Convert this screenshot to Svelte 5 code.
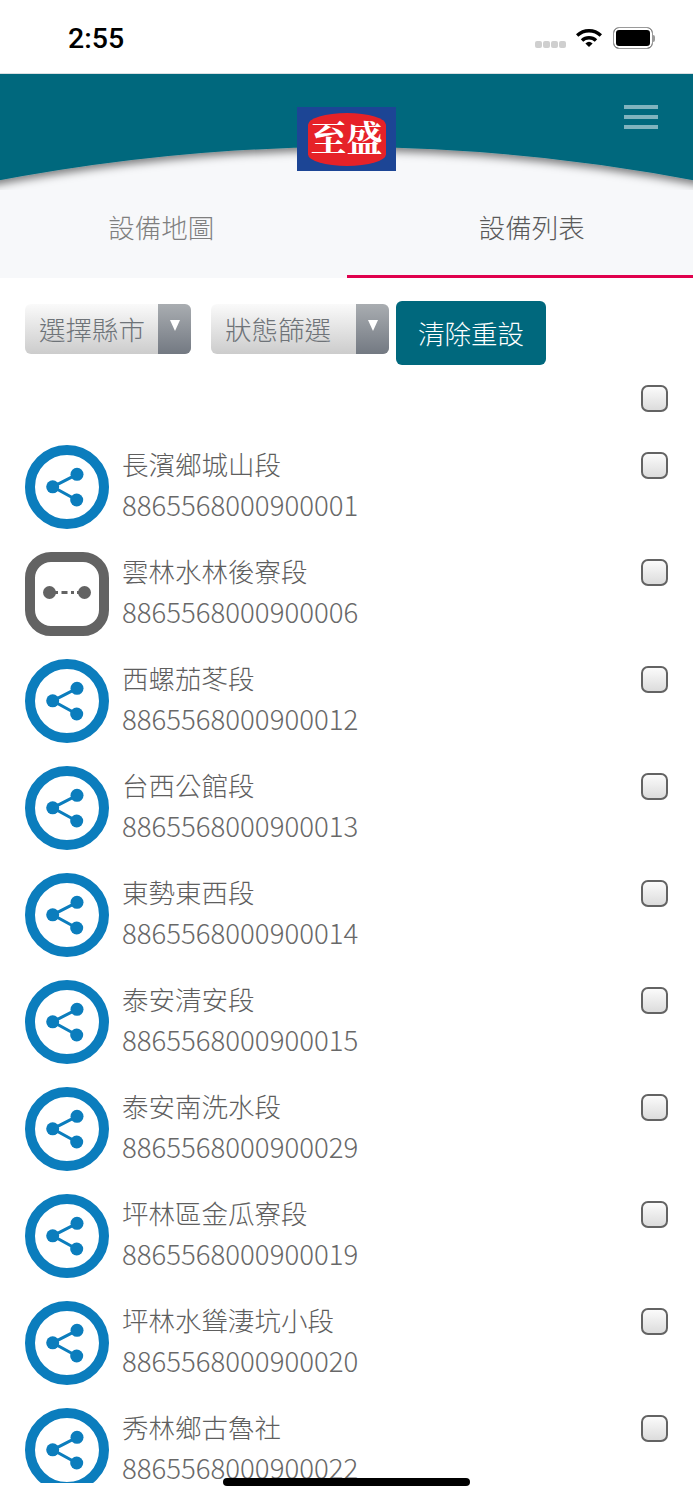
<script>
  const devices = [
    { name: '長濱鄉城山段', id: '8865568000900001', online: true },
    { name: '雲林水林後寮段', id: '8865568000900006', online: false },
    { name: '西螺茄苳段', id: '8865568000900012', online: true },
    { name: '台西公館段', id: '8865568000900013', online: true },
    { name: '東勢東西段', id: '8865568000900014', online: true },
    { name: '泰安清安段', id: '8865568000900015', online: true },
    { name: '泰安南洗水段', id: '8865568000900029', online: true },
    { name: '坪林區金瓜寮段', id: '8865568000900019', online: true },
    { name: '坪林水聳淒坑小段', id: '8865568000900020', online: true },
    { name: '秀林鄉古魯社', id: '8865568000900022', online: true }
  ];
  const filters = [
    { label: '選擇縣市', cls: 'city' },
    { label: '狀態篩選', cls: 'state' }
  ];
</script>

<div class="page">
  <div class="status">
    <span class="time">2:55</span>
    <div class="status-icons">
      <div class="signal"><i></i><i></i><i></i><i></i></div>
      <svg class="wifi" width="28" height="20" viewBox="0 0 28 20">
        <path d="M1 7.2a19 19 0 0 1 26 0l-2.3 2.5a15.600 15.600 0 0 0-21.400 0z" fill="#000" />
        <path d="M5.800 12.200a12 12 0 0 1 16.400 0l-2.400 2.500a8.500 8.500 0 0 0-11.600 0z" fill="#000" />
        <path d="M10.400 16.400a5.400 5.400 0 0 1 7.200 0L14 20z" fill="#000" />
      </svg>
      <div class="battery"><div class="cell"></div><div class="nub"></div></div>
    </div>
  </div>

  <header class="top">
    <svg class="curve" width="693" height="116" viewBox="0 0 693 116">
      <defs>
        <filter id="edge" x="-5%" y="-5%" width="110%" height="130%">
          <feDropShadow dx="0" dy="4" stdDeviation="4" flood-color="#000" flood-opacity="0.5" />
        </filter>
      </defs>
      <path d="M-10 -10H703V108Q520 73 346.500 73T-10 108Z" fill="#00687d" filter="url(#edge)" />
    </svg>
    <div class="logo"><div class="badge"><span>至盛</span></div></div>
    <div class="menu"><i></i><i></i><i></i></div>
  </header>

  <nav class="tabs">
    <div class="tab left">設備地圖</div>
    <div class="tab right active">設備列表</div>
  </nav>

  <div class="tools">
    {#each filters as f}
      <div class="filter {f.cls}">
        <span class="filter-label">{f.label}</span>
        <span class="arrow"><b></b></span>
      </div>
    {/each}
    <button class="reset">清除重設</button>
  </div>

  <div class="all"><input type="checkbox" /></div>

  <ul class="list">
    {#each devices as d}
      <li>
        {#if d.online}
          <svg width="84" height="84" viewBox="0 0 84 84">
            <circle cx="42" cy="42" r="37" fill="#fff" stroke="#0b7dbd" stroke-width="10" />
            <path d="M52 29.300 27.700 41.800 51.700 55" fill="none" stroke="#0b7dbd" stroke-width="3" />
            <circle cx="52" cy="29.300" r="6.500" fill="#0b7dbd" />
            <circle cx="27.700" cy="41.800" r="6.500" fill="#0b7dbd" />
            <circle cx="51.700" cy="55" r="6.500" fill="#0b7dbd" />
          </svg>
        {:else}
          <svg width="84" height="84" viewBox="0 0 84 84">
            <rect x="5" y="5" width="74" height="74" rx="21" fill="#fff" stroke="#636363" stroke-width="10" />
            <circle cx="24.500" cy="40.500" r="6.500" fill="#636363" />
            <circle cx="59.500" cy="40.500" r="6.500" fill="#636363" />
            <path d="M30 40.500H54" stroke="#636363" stroke-width="3" stroke-dasharray="3 3.500 6 3.500 3" />
          </svg>
        {/if}
        <div class="info">
          <div class="name">{d.name}</div>
          <div class="num">{d.id}</div>
        </div>
        <input type="checkbox" />
      </li>
    {/each}
  </ul>

  <div class="home"></div>
</div>

<style>
  :global(body) {
    background: #fff;
  }
  .page {
    position: relative;
    width: 693px;
    height: 1500px;
    font-family: 'Noto Sans CJK TC', 'Noto Sans', sans-serif;
    font-size: 26.5px;
    font-weight: 300;
    color: #5e5e5e;
  }
  .list,
  .tools,
  .all {
    background: #fff;
  }
  .status {
    display: flex;
    justify-content: space-between;
    height: 73px;
    padding: 0 38px 0 68px;
    border-bottom: 1px solid #d9dfe2;
  }
  .time {
    font-family: Roboto, sans-serif;
    font-size: 28.500px;
    font-weight: 500;
    line-height: 77px;
    color: #000;
  }
  .status-icons {
    display: flex;
    align-items: flex-start;
    padding-top: 27px;
  }
  .signal {
    display: flex;
    gap: 1px;
    margin: 14px 9px 0 0;
  }
  .signal i {
    width: 7px;
    height: 7px;
    border-radius: 2px;
    background: #cfcfcf;
  }
  .wifi {
    margin: 0 10px 0 0;
  }
  .battery {
    display: flex;
    align-items: center;
  }
  .cell {
    width: 40px;
    height: 22px;
    box-sizing: border-box;
    border: 1px solid #9a9a9a;
    box-shadow: inset 0 0 0 2px #fff;
    border-radius: 6px;
    background: #000;
  }
  .nub {
    width: 2px;
    height: 7px;
    background: #9a9a9a;
    border-radius: 0 2px 2px 0;
  }
  .top {
    position: relative;
    height: 106px;
    background: #f7f8fa;
  }
  .curve {
    position: absolute;
    left: 0;
    top: 0;
  }
  .logo {
    position: absolute;
    left: 297px;
    top: 33px;
    width: 99px;
    height: 64px;
    display: flex;
    align-items: center;
    justify-content: center;
    background: #1c4595;
  }
  .badge {
    width: 78px;
    height: 53px;
    display: flex;
    align-items: center;
    justify-content: center;
    padding-bottom: 4px;
    box-sizing: border-box;
    background: #e62228;
    border-radius: 50% / 22%;
  }
  .badge span {
    font-family: 'Noto Serif CJK TC', 'Noto Sans CJK TC', serif;
    font-size: 36px;
    font-weight: 700;
    line-height: 1;
    color: #fff;
  }
  .menu {
    position: absolute;
    right: 35px;
    top: 31px;
    width: 34px;
    display: flex;
    flex-direction: column;
    gap: 6px;
  }
  .menu i {
    height: 4px;
    background: #7fb3be;
  }
  .tabs {
    display: flex;
    height: 98px;
    background: #f7f8fa;
  }
  .tab {
    flex: 1;
    box-sizing: border-box;
    text-align: center;
    line-height: 93px;
    color: #7f7f7f;
  }
  .tab.left {
    padding-right: 24px;
  }
  .tab.right {
    padding-left: 24px;
  }
  .tab.active {
    color: #5a5a5a;
    border-bottom: 3px solid #e0004d;
  }
  .tools {
    display: flex;
    align-items: flex-start;
    padding: 23px 0 0 25px;
  }
  .filter {
    display: flex;
    justify-content: space-between;
    height: 50px;
    margin-top: 3px;
    border-radius: 6px;
    overflow: hidden;
    background: linear-gradient(#fafafa, #cccccc);
  }
  .filter.city {
    width: 166px;
    margin-right: 20px;
  }
  .filter.state {
    width: 178px;
    margin-right: 7px;
  }
  .filter-label {
    padding-left: 14px;
    line-height: 50px;
    color: #6e7378;
  }
  .arrow {
    width: 33px;
    display: flex;
    justify-content: center;
    padding-top: 16px;
    box-sizing: border-box;
    background: linear-gradient(#a9adb1, #737982);
  }
  .arrow b {
    width: 0;
    height: 0;
    border-left: 5.500px solid transparent;
    border-right: 5.500px solid transparent;
    border-top: 11px solid #fff;
  }
  .reset {
    width: 150px;
    height: 64px;
    padding: 0 0 2px;
    border: 0;
    border-radius: 6px;
    background: #00687d;
    color: #fff;
    font: inherit;
  }
  .all {
    display: flex;
    justify-content: flex-end;
    padding: 20px 25px 33px 0;
  }
  input[type='checkbox'] {
    appearance: none;
    display: block;
    box-sizing: border-box;
    width: 27px;
    height: 27px;
    margin: 0;
    border: 2px solid #636363;
    border-radius: 7px;
    background: linear-gradient(#fbfbfb, #dcdcdc);
  }
  .list {
    list-style: none;
    margin: 0;
    padding: 0;
    height: 1038px;
    overflow: hidden;
  }
  li {
    display: grid;
    grid-template-columns: 84px 1fr 27px;
    column-gap: 13px;
    height: 107px;
    padding: 0 25px;
    box-sizing: border-box;
  }
  li svg {
    display: block;
  }
  li input {
    margin-top: 7px !important;
  }
  .info {
    margin-top: -1px;
  }
  .name,
  .num {
    line-height: 40px;
    white-space: nowrap;
  }
  .num {
    font-size: 27.600px;
    color: #686868;
  }
  .home {
    position: absolute;
    left: 223px;
    top: 1478px;
    width: 247px;
    height: 8px;
    border-radius: 4px;
    background: #000;
  }
</style>
